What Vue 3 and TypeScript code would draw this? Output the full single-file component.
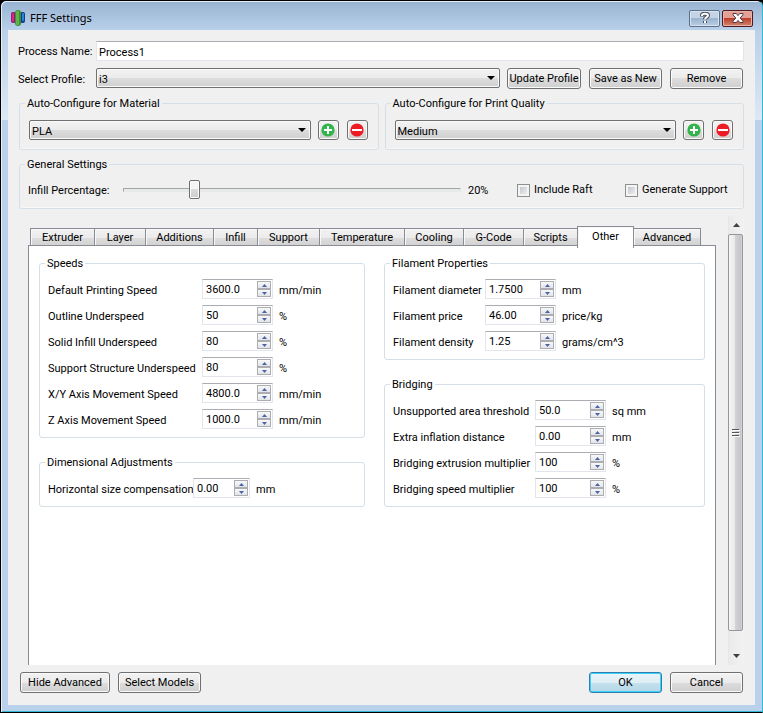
<script setup lang="ts">
import { ref } from 'vue'

interface Field {
  id: string
  label: string
  value: string
  unit: string
}

interface Group {
  title: string
  kind: string
  fields: Field[]
}

interface Preset {
  id: string
  title: string
  value: string
}

const processName = ref('Process1')
const profile = ref('i3')
const infill = ref(20)
const includeRaft = ref(false)
const generateSupport = ref(false)
const activeTab = ref('Other')

const tabs = ['Extruder', 'Layer', 'Additions', 'Infill', 'Support', 'Temperature', 'Cooling', 'G-Code', 'Scripts', 'Other', 'Advanced']

const presets = ref<Preset[]>([
  { id: 'material', title: 'Auto-Configure for Material', value: 'PLA' },
  { id: 'quality', title: 'Auto-Configure for Print Quality', value: 'Medium' },
])

const columns = ref<Group[][]>([
  [
    {
      title: 'Speeds',
      kind: 'speeds',
      fields: [
        { id: 'printing-speed', label: 'Default Printing Speed', value: '3600.0', unit: 'mm/min' },
        { id: 'outline', label: 'Outline Underspeed', value: '50', unit: '%' },
        { id: 'solid-infill', label: 'Solid Infill Underspeed', value: '80', unit: '%' },
        { id: 'support-structure', label: 'Support Structure Underspeed', value: '80', unit: '%' },
        { id: 'xy-speed', label: 'X/Y Axis Movement Speed', value: '4800.0', unit: 'mm/min' },
        { id: 'z-speed', label: 'Z Axis Movement Speed', value: '1000.0', unit: 'mm/min' },
      ],
    },
    {
      title: 'Dimensional Adjustments',
      kind: 'dimensions',
      fields: [{ id: 'horizontal-size', label: 'Horizontal size compensation', value: '0.00', unit: 'mm' }],
    },
  ],
  [
    {
      title: 'Filament Properties',
      kind: 'filament',
      fields: [
        { id: 'diameter', label: 'Filament diameter', value: '1.7500', unit: 'mm' },
        { id: 'price', label: 'Filament price', value: '46.00', unit: 'price/kg' },
        { id: 'density', label: 'Filament density', value: '1.25', unit: 'grams/cm^3' },
      ],
    },
    {
      title: 'Bridging',
      kind: 'bridging',
      fields: [
        { id: 'area-threshold', label: 'Unsupported area threshold', value: '50.0', unit: 'sq mm' },
        { id: 'inflation', label: 'Extra inflation distance', value: '0.00', unit: 'mm' },
        { id: 'bridge-extrusion', label: 'Bridging extrusion multiplier', value: '100', unit: '%' },
        { id: 'bridge-speed', label: 'Bridging speed multiplier', value: '100', unit: '%' },
      ],
    },
  ],
])

function step(field: Field, delta: number) {
  const decimals = (field.value.split('.')[1] ?? '').length
  field.value = Math.max(0, Number(field.value) + delta).toFixed(decimals)
}
</script>

<template>
  <div class="window">
    <header class="titlebar">
      <svg class="logo" width="14" height="16" viewBox="0 0 14 16" aria-hidden="true">
        <rect x="0" y="2" width="5" height="11" rx="2" fill="#8d1a78" />
        <rect x="1" y="3" width="2" height="9" rx="1" fill="#e0248c" />
        <rect x="9" y="2" width="5" height="11" rx="2" fill="#173a8c" />
        <rect x="11" y="3" width="2" height="8" rx="1" fill="#2488d8" />
        <rect x="4" y="0" width="6" height="16" rx="3" fill="#3a8f35" />
        <rect x="5" y="1" width="3" height="14" rx="1" fill="#5fb648" />
      </svg>
      <h1>FFF Settings</h1>
      <button class="caption" type="button" aria-label="Help">
        <svg width="12" height="12" viewBox="0 0 12 12" aria-hidden="true">
          <path d="M3 4.500V3.500C3 1.200 9 1.200 9 3.500C9 5.200 6 5 6 7.500M6 9v2" fill="none" stroke="#454d5c" stroke-width="4" />
          <path d="M3 4V3.500C3 1.200 9 1.200 9 3.500C9 5.200 6 5 6 7.500M6 9v2" fill="none" stroke="#fff" stroke-width="2" />
        </svg>
      </button>
      <button class="caption close" type="button" aria-label="Close">
        <svg width="12" height="10" viewBox="0 0 12 10" aria-hidden="true">
          <path d="M1 .5h3.300L6 2.600 7.700.5H11v1.300L8.200 5 11 8.200v1.300H7.700L6 7.400 4.300 9.500H1V8.200L3.800 5 1 1.800z" fill="#fff" stroke="#4b3a45" stroke-width="1" />
        </svg>
      </button>
    </header>

    <main class="content">
      <div class="row">
        <label class="lead" for="process-name">Process Name:</label>
        <input id="process-name" v-model="processName" class="textbox" type="text" />
      </div>
      <div class="row profile-row">
        <label class="lead" for="profile">Select Profile:</label>
        <span class="combo">
          <select id="profile" v-model="profile"><option>i3</option></select>
        </span>
        <div class="profile-actions">
          <button class="btn update" type="button">Update Profile</button>
          <button class="btn" type="button">Save as New</button>
          <button class="btn" type="button">Remove</button>
        </div>
      </div>

      <div class="presets">
        <fieldset v-for="preset in presets" :key="preset.id">
          <legend>{{ preset.title }}</legend>
          <div class="preset">
            <span class="combo">
              <select v-model="preset.value" :aria-label="preset.title"><option>{{ preset.value }}</option></select>
            </span>
            <div class="preset-actions">
              <button class="btn icon" type="button" aria-label="Add">
                <svg width="14" height="14" viewBox="0 0 14 14" aria-hidden="true">
                  <circle cx="7" cy="7" r="6.600" fill="#33b44a" />
                  <path d="M3 7h8M7 3v8" stroke="#fff" stroke-width="2" />
                </svg>
              </button>
              <button class="btn icon" type="button" aria-label="Remove">
                <svg width="14" height="14" viewBox="0 0 14 14" aria-hidden="true">
                  <circle cx="7" cy="7" r="6.600" fill="#ed1c24" />
                  <path d="M2 7h10" stroke="#fff" stroke-width="2" />
                </svg>
              </button>
            </div>
          </div>
        </fieldset>
      </div>

      <fieldset>
        <legend>General Settings</legend>
        <div class="general">
          <label for="infill">Infill Percentage:</label>
          <input id="infill" v-model.number="infill" type="range" min="0" max="100" />
          <output for="infill">{{ infill }}%</output>
          <label class="check"><input v-model="includeRaft" type="checkbox" />Include Raft</label>
          <label class="check"><input v-model="generateSupport" type="checkbox" />Generate Support</label>
        </div>
      </fieldset>

      <div class="scroll-area">
        <section class="notebook">
          <div class="tabs" role="tablist">
            <button
              v-for="tab in tabs"
              :key="tab"
              class="tab"
              :class="{ active: tab === activeTab }"
              type="button"
              role="tab"
              :aria-selected="tab === activeTab"
              @click="activeTab = tab"
            >{{ tab }}</button>
          </div>
          <div class="pane" role="tabpanel">
            <div v-for="(column, index) in columns" :key="index" class="column">
              <fieldset v-for="group in column" :key="group.title">
                <legend>{{ group.title }}</legend>
                <div class="fields" :class="group.kind">
                  <div v-for="field in group.fields" :key="field.id" class="field">
                    <label :for="field.id">{{ field.label }}</label>
                    <span class="spin">
                      <input :id="field.id" v-model="field.value" type="text" />
                      <span class="steppers">
                        <button type="button" aria-label="Increase" @click="step(field, 1)">
                          <svg width="5" height="3" viewBox="0 0 5 3" aria-hidden="true"><path d="M0 3L2.500 0 5 3z" /></svg>
                        </button>
                        <button type="button" aria-label="Decrease" @click="step(field, -1)">
                          <svg width="5" height="3" viewBox="0 0 5 3" aria-hidden="true"><path d="M0 0L2.500 3 5 0z" /></svg>
                        </button>
                      </span>
                    </span>
                    <span class="unit">{{ field.unit }}</span>
                  </div>
                </div>
              </fieldset>
            </div>
          </div>
        </section>
        <div class="scrollbar">
          <button type="button" aria-label="Scroll up">
            <svg width="7" height="4" viewBox="0 0 7 4" aria-hidden="true"><path d="M0 4L3.500 0 7 4z" /></svg>
          </button>
          <div class="thumb">
            <svg width="8" height="8" viewBox="0 0 8 8" aria-hidden="true">
              <path d="M0 .5h7M0 3.500h7M0 6.500h7" stroke="#555" />
              <path d="M1 1.500h7M1 4.500h7M1 7.500h7" stroke="#fff" />
            </svg>
          </div>
          <button type="button" aria-label="Scroll down">
            <svg width="7" height="4" viewBox="0 0 7 4" aria-hidden="true"><path d="M0 0L3.500 4 7 0z" /></svg>
          </button>
        </div>
      </div>

      <footer class="actions">
        <button class="btn wide" type="button">Hide Advanced</button>
        <button class="btn medium" type="button">Select Models</button>
        <button class="btn primary" type="button">OK</button>
        <button class="btn" type="button">Cancel</button>
      </footer>
    </main>
  </div>
</template>

<style>
body {
  background: #000;
}
</style>

<style scoped>
* {
  box-sizing: border-box;
}

.window {
  display: flex;
  flex-direction: column;
  min-height: 100vh;
  padding: 0 7px 7px;
  border: 1px solid #000;
  border-right-color: #35b8d8;
  border-radius: 6px 6px 0 0;
  background: linear-gradient(#98b3d1 0, #b9d1ea 30px, #dce8f5 119px, #b9d1ea 119px);
  box-shadow: inset 1px 1px #e4eef8, inset 0 -1px #35b8d8;
  color: #000;
  font: 11px/14px Roboto, "Noto Sans", sans-serif;
}

button,
input,
select {
  margin: 0;
  padding: 0;
  font: inherit;
  color: inherit;
}

.titlebar {
  display: flex;
  align-items: center;
  height: 29px;
  padding: 5px 2px 0 3px;
}

h1 {
  flex: 1;
  margin: 0 0 0 5px;
  font: 11px/16px "Noto Sans", "Open Sans", sans-serif;
}

.caption {
  display: flex;
  align-items: center;
  justify-content: center;
  width: 31px;
  height: 17px;
  margin-left: 2px;
  border: 1px solid #5d7088;
  border-radius: 2px;
  background: linear-gradient(#c4d4e6 50%, #9cb4d0 50%, #b8cde4);
  box-shadow: inset 0 0 0 1px #d8e4f1;
}

.close {
  border-color: #501820;
  background: linear-gradient(#e3a095 50%, #bd3f2b 50%, #d2866e);
  box-shadow: inset 0 0 0 1px #e6b2a8;
}

.content {
  display: flex;
  flex: 1;
  flex-direction: column;
  gap: 7px;
  padding: 11px 11px 12px;
  background: #f0f0f0;
}

.row {
  display: flex;
  align-items: center;
}

.lead {
  width: 78px;
  margin-left: -1px;
  padding-top: 2px;
  white-space: nowrap;
}

.textbox {
  flex: 1;
  height: 20px;
  padding: 2px 2px 0;
  border: 1px solid #e2e5ec;
  border-top-color: #abadb3;
  background: #fff;
}

.profile-row {
  align-items: flex-start;
}

.profile-row .lead {
  padding-top: 5px;
}

.combo {
  position: relative;
  display: flex;
  flex: 1;
  min-width: 0;
}

.combo::after {
  position: absolute;
  top: 8px;
  right: 5px;
  border: 4px solid transparent;
  border-top-color: #000;
  border-bottom: 0;
  content: "";
  pointer-events: none;
}

select {
  flex: 1;
  height: 20px;
  padding: 3px 2px 0;
  border: 1px solid #707070;
  border-radius: 2px;
  background: linear-gradient(#f2f2f2, #ebebeb 50%, #dddddd 50%, #cfcfcf);
  box-shadow: inset 0 0 0 1px #fafafa;
  appearance: none;
}

.btn {
  display: flex;
  align-items: center;
  justify-content: center;
  width: 73px;
  height: 21px;
  padding-top: 1px;
  border: 1px solid #707070;
  border-radius: 3px;
  background: linear-gradient(#f2f2f2, #ebebeb 50%, #dddddd 50%, #cfcfcf);
  box-shadow: inset 0 0 0 1px #fafafa;
  white-space: nowrap;
}

.profile-actions {
  display: flex;
  gap: 8px;
  padding: 0 1px 0 7px;
}

.update {
  width: 74px;
}

.icon {
  width: 21px;
  height: 20px;
  padding: 0;
}

.primary {
  border-color: #2c7fae;
  background: linear-gradient(#e9f4f8, #dfeef5 50%, #c4e1ee 50%, #b5d7e7);
  box-shadow: inset 0 0 0 1px #3fd0f5;
}

fieldset {
  min-width: 0;
  margin: 0;
  padding: 0;
  border: 1px solid #d5dfe7;
  border-radius: 3px;
}

.content > fieldset,
.presets fieldset {
  box-shadow: inset 0 -1px #f8f8f8;
}

legend {
  height: 14px;
  margin-left: 5px;
  padding: 0 2px;
  line-height: 16px;
  white-space: nowrap;
}

.presets {
  display: grid;
  grid-template-columns: 1fr 1fr;
  gap: 6px;
}

.preset {
  display: flex;
  gap: 7px;
  padding: 10px 10px 9px 9px;
}

.preset-actions {
  display: flex;
  gap: 8px;
}

.general {
  display: flex;
  align-items: center;
  height: 37px;
  padding: 9px 8px 8px;
}

.general > label:first-child {
  width: 95px;
  padding-top: 2px;
}

.general output {
  width: 56px;
  padding: 2px 0 0 7px;
}

input[type="range"] {
  flex: 1;
  min-width: 0;
  height: 20px;
  background: none;
  appearance: none;
}

input[type="range"]::-webkit-slider-runnable-track {
  height: 4px;
  border: 1px solid #e7eaea;
  border-top-color: #a5a5a5;
  border-left-color: #a5a5a5;
  background: #e7eaea;
}

input[type="range"]::-webkit-slider-thumb {
  width: 11px;
  height: 19px;
  margin-top: -9px;
  border: 1px solid #6f6f6f;
  border-radius: 2px;
  background: linear-gradient(#f5f5f5 50%, #dadada 50%, #cccccc);
  box-shadow: inset 0 0 0 1px #fff;
  appearance: none;
}

.check {
  display: flex;
  align-items: center;
  gap: 4px;
  width: 108px;
  white-space: nowrap;
}

.check:last-child {
  width: 110px;
}

input[type="checkbox"] {
  width: 13px;
  height: 13px;
  border: 1px solid #8e8f8f;
  background: linear-gradient(135deg, #b8bdc5, #f6f6f6);
  box-shadow: inset 0 0 0 2px #f4f4f4;
  appearance: none;
}

input[type="checkbox"]:checked {
  background: #2b3f7a;
}

.scroll-area {
  display: flex;
  flex: 1;
  gap: 12px;
  padding-left: 9px;
}

.notebook {
  display: flex;
  flex: 1;
  flex-direction: column;
  min-width: 0;
  padding-top: 10px;
}

.tabs {
  display: grid;
  grid-template-columns: 65px 51px 68px 44px 62px 85px 59px 60px 54px 56px 67px;
  align-items: end;
  height: 19px;
  padding-left: 2px;
}

.tab {
  height: 19px;
  border: 1px solid #898c95;
  border-width: 1px 1px 0 0;
  background: linear-gradient(#f2f2f2, #ebebeb 50%, #dddddd 50%, #cfcfcf);
  box-shadow: inset 1px 1px #f8f8f8;
  white-space: nowrap;
}

.tab:first-child {
  border-left-width: 1px;
}

.tab.active {
  height: 22px;
  margin: 0 0 -1px -1px;
  padding-bottom: 1px;
  border-left-width: 1px;
  background: #fff;
  z-index: 1;
}

.pane {
  display: grid;
  flex: 1;
  grid-template-columns: 326fr 321fr;
  align-items: start;
  gap: 19px;
  padding: 10px 10px 0;
  border: 1px solid #898c95;
  border-bottom: 0;
  background: #fff;
}

.column {
  display: grid;
  gap: 17px;
}

.fields {
  display: grid;
  gap: 6px;
  padding: 9px 8px 8px;
}

.field {
  display: grid;
  align-items: center;
  column-gap: 6px;
  white-space: nowrap;
}

.field label,
.unit {
  padding-top: 4px;
}

.speeds .field {
  grid-template-columns: 149px 70px 1fr;
}

.dimensions .field {
  grid-template-columns: 140px 56px 1fr;
}

.filament .field {
  grid-template-columns: 87px 70px 1fr;
}

.bridging .field {
  grid-template-columns: 137px 70px 1fr;
}

.spin {
  display: flex;
  height: 20px;
  margin-left: -1px;
  padding: 1px;
  border: 1px solid #e2e5ec;
  border-top-color: #abadb3;
  background: #fff;
}

.spin input {
  flex: 1;
  min-width: 0;
  padding: 2px 0 0 2px;
  border: 0;
  background: none;
}

.steppers {
  display: grid;
  width: 14px;
}

.steppers button {
  display: flex;
  align-items: center;
  justify-content: center;
  border: 1px solid #abadb3;
  background: linear-gradient(#f8f8f8, #e2e4e8);
}

.steppers svg {
  fill: #4a62a8;
}

.scrollbar {
  display: flex;
  flex-direction: column;
  width: 16px;
  padding-right: 1px;
  border-left: 1px solid #e6e6e6;
  background: linear-gradient(90deg, #eaeaea, #f2f2f2);
}

.scrollbar button {
  display: flex;
  align-items: center;
  justify-content: center;
  height: 18px;
  border: 0;
  background: none;
}

.scrollbar button:last-child {
  margin-top: 16px;
}

.scrollbar button svg {
  fill: #404040;
}

.thumb {
  display: flex;
  flex: 1;
  align-items: center;
  justify-content: center;
  margin-left: -1px;
  border: 1px solid #979797;
  border-radius: 2px;
  background: linear-gradient(90deg, #f5f5f5, #e9e9eb 45%, #d2d3d6 50%, #c4c5c9 90%, #dcdcde);
}

.actions {
  display: flex;
  gap: 8px;
  padding: 0 1px;
}

.wide {
  width: 90px;
}

.medium {
  width: 83px;
}

.primary {
  margin-left: auto;
}
</style>
